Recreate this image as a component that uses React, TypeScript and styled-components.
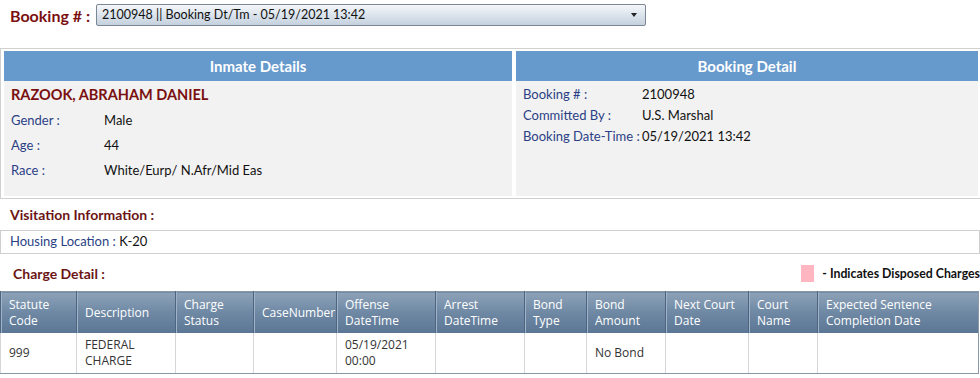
import styled, { createGlobalStyle } from 'styled-components'

const GlobalStyle = createGlobalStyle`
  body {
    margin: 0;
    background: #fff;
    font-family: 'Open Sans', 'Noto Sans', sans-serif;
  }
`

const columns = [
  { title: 'Statute\nCode', width: 76 },
  { title: 'Description', width: 99 },
  { title: 'Charge\nStatus', width: 78 },
  { title: 'CaseNumber', width: 83 },
  { title: 'Offense\nDateTime', width: 99 },
  { title: 'Arrest\nDateTime', width: 89 },
  { title: 'Bond\nType', width: 62 },
  { title: 'Bond\nAmount', width: 79 },
  { title: 'Next Court\nDate', width: 83 },
  { title: 'Court\nName', width: 69 },
  { title: 'Expected Sentence\nCompletion Date', width: 161 },
]

const charges = [
  ['999', 'FEDERAL\nCHARGE', '', '', '05/19/2021\n00:00', '', '', 'No Bond', '', '', ''],
]

const App = () => {
  return (
    <Page>
      <GlobalStyle />
      <BookingBar>
        <BookingLabel>Booking # :</BookingLabel>
        <BookingSelect>
          <span>2100948 || Booking Dt/Tm - 05/19/2021 13:42</span>
          <Caret />
        </BookingSelect>
      </BookingBar>

      <DetailFrame>
        <Panel>
          <PanelHeader>Inmate Details</PanelHeader>
          <PanelBody>
            <InmateName>RAZOOK, ABRAHAM DANIEL</InmateName>
            <InfoGrid $labelWidth={93} $rowHeight={25}>
              <Label>Gender :</Label>
              <Value>Male</Value>
              <Label>Age :</Label>
              <Value>44</Value>
              <Label>Race :</Label>
              <Value>White/Eurp/ N.Afr/Mid Eas</Value>
            </InfoGrid>
          </PanelBody>
        </Panel>
        <Panel>
          <PanelHeader>Booking Detail</PanelHeader>
          <PanelBody $top={2}>
            <InfoGrid $labelWidth={119} $rowHeight={21}>
              <Label>Booking # :</Label>
              <Value>2100948</Value>
              <Label>Committed By :</Label>
              <Value>U.S. Marshal</Value>
              <Label>Booking Date-Time :</Label>
              <Value>05/19/2021 13:42</Value>
            </InfoGrid>
          </PanelBody>
        </Panel>
      </DetailFrame>

      <SectionTitle>Visitation Information :</SectionTitle>
      <HousingBox>
        <Label>Housing Location :</Label> K-20
      </HousingBox>

      <ChargeBar>
        <SectionTitle $indent={13}>Charge Detail :</SectionTitle>
        <Legend>
          <LegendSwatch />- Indicates Disposed Charges
        </Legend>
      </ChargeBar>

      <ChargeTable>
        <colgroup>
          {columns.map((c) => (
            <col key={c.title} style={{ width: c.width }} />
          ))}
        </colgroup>
        <thead>
          <tr>
            {columns.map((c) => (
              <HeadCell key={c.title}>{c.title}</HeadCell>
            ))}
          </tr>
        </thead>
        <tbody>
          {charges.map((row, i) => (
            <tr key={i}>
              {row.map((cell, j) => (
                <BodyCell key={j}>{cell}</BodyCell>
              ))}
            </tr>
          ))}
        </tbody>
      </ChargeTable>
    </Page>
  )
}

export default App

const Page = styled.div`
  width: 980px;
  height: 378px;
  overflow: hidden;
`

const BookingBar = styled.div`
  display: flex;
  align-items: center;
  gap: 6px;
  height: 30px;
  padding: 0 0 0 10px;
`

const BookingLabel = styled.div`
  font-family: 'Lato', sans-serif;
  font-size: 16px;
  font-weight: bold;
  color: #7a1010;
`

const BookingSelect = styled.div`
  display: flex;
  align-items: center;
  justify-content: space-between;
  box-sizing: border-box;
  width: 550px;
  height: 22px;
  margin-top: -1px;
  padding: 0 8px 0 5px;
  border: 1px solid #7b8794;
  border-radius: 2px;
  background: linear-gradient(#f4f7fa, #d9e2eb 55%, #c5d1de);
  font-family: 'Lato', sans-serif;
  font-size: 12.5px;
  color: #111;
`

const Caret = styled.span`
  width: 0;
  height: 0;
  border-left: 3px solid transparent;
  border-right: 3px solid transparent;
  border-top: 4px solid #222;
`

const DetailFrame = styled.div`
  display: grid;
  grid-template-columns: 508px 1fr;
  gap: 4px;
  height: 151px;
  margin-top: 18px;
  padding: 2px 2px 2px 3px;
  border: 1px solid #d0d0d0;
  border-right: none;
  box-sizing: border-box;
`

const Panel = styled.div`
  display: flex;
  flex-direction: column;
  background: #f2f2f2;
`

const PanelHeader = styled.div`
  height: 30px;
  line-height: 30px;
  background: #6699cc;
  color: #fff;
  text-align: center;
  font-family: 'Lato', sans-serif;
  font-size: 15px;
  font-weight: bold;
`

const PanelBody = styled.div<{ $top?: number }>`
  padding: ${(p) => p.$top ?? 5}px 7px 5px;
`

const InmateName = styled.div`
  font-family: 'Lato', sans-serif;
  font-size: 14.5px;
  font-weight: bold;
  color: #7a1010;
  height: 21px;
  line-height: 18px;
`

const InfoGrid = styled.div<{ $labelWidth: number; $rowHeight: number }>`
  display: grid;
  grid-template-columns: ${(p) => p.$labelWidth}px 1fr;
  grid-auto-rows: ${(p) => p.$rowHeight}px;
  align-items: center;
  font-family: 'Lato', sans-serif;
  font-size: 13px;
`

const Label = styled.span`
  font-family: 'Lato', sans-serif;
  font-size: 13px;
  color: #2b3f85;
`

const Value = styled.span`
  color: #111;
`

const SectionTitle = styled.div<{ $indent?: number }>`
  padding-left: ${(p) => p.$indent ?? 10}px;
  height: 31px;
  line-height: 31px;
  font-family: 'Lato', sans-serif;
  font-size: 14px;
  font-weight: bold;
  color: #6b1515;
`

const HousingBox = styled.div`
  box-sizing: border-box;
  width: 980px;
  height: 24px;
  line-height: 20px;
  padding-left: 9px;
  border: 1px solid #cfcfcf;
  font-family: 'Lato', sans-serif;
  font-size: 13px;
  color: #111;
`

const ChargeBar = styled.div`
  display: flex;
  justify-content: space-between;
  align-items: center;
  height: 36px;
  margin-top: 1px;
`

const Legend = styled.div`
  display: flex;
  align-items: center;
  gap: 8px;
  white-space: nowrap;
  font-family: 'Lato', sans-serif;
  font-size: 12.3px;
  font-weight: bold;
  color: #111;
`

const LegendSwatch = styled.span`
  width: 13px;
  height: 17px;
  background: #ffb6c1;
`

const ChargeTable = styled.table`
  width: 978px;
  table-layout: fixed;
  border-collapse: collapse;
  border: 1px solid #8a97a5;
  font-family: 'Open Sans', sans-serif;
  font-size: 12px;
`

const HeadCell = styled.th`
  height: 41px;
  padding: 0 8px;
  text-align: left;
  vertical-align: middle;
  font-weight: normal;
  line-height: 16px;
  white-space: pre-line;
  color: #fff;
  background: linear-gradient(#8da2b8, #6e88a4 50%, #5b7694);
  border-left: 1px solid #4d6580;
  box-shadow: inset 1px 0 0 #9fb2c6;
`

const BodyCell = styled.td`
  height: 40px;
  padding: 0 8px;
  vertical-align: middle;
  line-height: 16px;
  white-space: pre-line;
  color: #333;
  border-left: 1px solid #d6d6d6;
  border-bottom: 1px solid #8a97a5;
`
